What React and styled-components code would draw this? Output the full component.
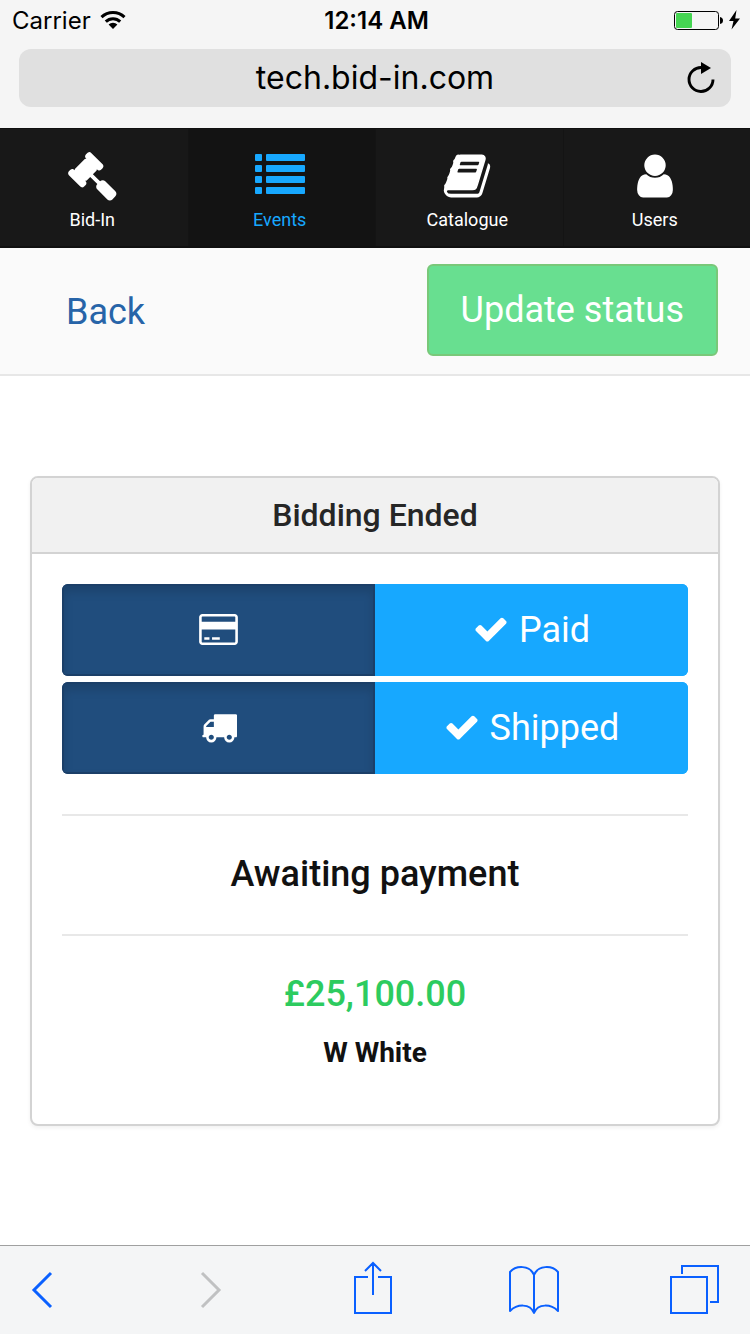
import { useState } from "react";
import styled, { createGlobalStyle } from "styled-components";

const tabs = [
  { id: "bid-in", label: "Bid-In", Icon: GavelIcon },
  { id: "events", label: "Events", Icon: ListIcon },
  { id: "catalogue", label: "Catalogue", Icon: BookIcon },
  { id: "users", label: "Users", Icon: UserIcon },
];

export default function App() {
  const [activeTab, setActiveTab] = useState("events");
  const [paid, setPaid] = useState(false);
  const [shipped, setShipped] = useState(false);

  return (
    <>
      <GlobalStyle />
      <Page>
        <BrowserTop>
          <StatusBar>
            <Carrier>
              <span>Carrier</span>
              <WifiIcon />
            </Carrier>
            <Time>12:14 AM</Time>
            <Battery>
              <BatteryIcon />
            </Battery>
          </StatusBar>
          <AddressBar>
            <Address>tech.bid-in.com</Address>
            <PlainButton aria-label="Reload">
              <ReloadIcon />
            </PlainButton>
          </AddressBar>
        </BrowserTop>

        <Nav>
          {tabs.map(({ id, label, Icon }) => (
            <NavButton
              key={id}
              $active={activeTab === id}
              onClick={() => setActiveTab(id)}
            >
              <Icon />
              <span>{label}</span>
            </NavButton>
          ))}
        </Nav>

        <ActionBar>
          <BackLink href="#back">Back</BackLink>
          <UpdateButton>Update status</UpdateButton>
        </ActionBar>

        <Main>
          <Panel>
            <PanelTitle>Bidding Ended</PanelTitle>
            <PanelBody>
              <ToggleList>
                <ToggleRow>
                  <ToggleButton
                    $pressed={!paid}
                    aria-label="Not paid"
                    onClick={() => setPaid(false)}
                  >
                    <CardIcon />
                  </ToggleButton>
                  <ToggleButton $pressed={paid} onClick={() => setPaid(true)}>
                    <CheckIcon />
                    <span>Paid</span>
                  </ToggleButton>
                </ToggleRow>
                <ToggleRow>
                  <ToggleButton
                    $pressed={!shipped}
                    aria-label="Not shipped"
                    onClick={() => setShipped(false)}
                  >
                    <TruckIcon />
                  </ToggleButton>
                  <ToggleButton
                    $pressed={shipped}
                    onClick={() => setShipped(true)}
                  >
                    <CheckIcon />
                    <span>Shipped</span>
                  </ToggleButton>
                </ToggleRow>
              </ToggleList>
              <State>Awaiting payment</State>
              <Price>£25,100.00</Price>
              <Buyer>W White</Buyer>
            </PanelBody>
          </Panel>
        </Main>

        <BrowserBottom>
          <PlainButton aria-label="Previous page">
            <ChevronLeftIcon />
          </PlainButton>
          <PlainButton aria-label="Next page" disabled>
            <ChevronRightIcon />
          </PlainButton>
          <PlainButton aria-label="Share">
            <ShareIcon />
          </PlainButton>
          <PlainButton aria-label="Bookmarks">
            <BookmarksIcon />
          </PlainButton>
          <PlainButton aria-label="Tabs">
            <TabsIcon />
          </PlainButton>
        </BrowserBottom>
      </Page>
    </>
  );
}

// --------------------------icons

function WifiIcon() {
  return (
    <svg width="26" height="20" viewBox="0 0 26 20">
      <g fill="none" stroke="#000" strokeWidth="3">
        <path d="M1.5 7.2a16.5 16.5 0 0 1 23 0" />
        <path d="M5.8 11.6a10.3 10.3 0 0 1 14.4 0" />
      </g>
      <path d="M8.6 14.6a6.3 6.3 0 0 1 8.8 0L13 19z" />
    </svg>
  );
}

function BatteryIcon() {
  return (
    <svg width="67" height="20" viewBox="0 0 67 20">
      <rect x=".5" y="1.5" width="44" height="18" rx="3" fill="none" stroke="#000" />
      <rect x="2" y="3" width="16" height="15" rx="1" fill="#45d552" />
      <path d="M46 7q3 .5 3 3.5t-3 3.5z" />
      <path d="M62.500 0 55 11h4.500L57.500 19.500 66 8.500h-4.800z" />
    </svg>
  );
}

function ReloadIcon() {
  return (
    <svg width="28" height="32" viewBox="0 0 28 32">
      <path
        d="M14.500 5.500A12 12 0 1 0 26 17.500"
        fill="none"
        stroke="#000"
        strokeWidth="2.900"
      />
      <path d="M14 0v12L24 6z" />
    </svg>
  );
}

function GavelIcon() {
  return (
    <svg width="50" height="50" viewBox="0 0 1792 1792" fill="currentColor">
      <path d="M1771 1536q0 53-37 90l-107 108q-39 37-91 37-53 0-90-37l-363-364q-38-36-38-90 0-53 43-96l-256-256-126 126q-14 14-34 14t-34-14q2 2 12.500 12t12.500 13 10 11.500 10 13.500 6 13.500 5.500 16.500 1.500 18q0 38-28 68-3 3-16.500 18t-19 20.500-18.500 16.500-22 15.500-22 9-26 4.500q-40 0-68-28l-408-408q-28-28-28-68 0-13 4.500-26t9-22 15.500-22 16.500-18.500 20.500-19 18-16.500q30-28 68-28 10 0 18 1.500t16.500 5.500 13.500 6 13.500 10 11.500 10 13 12.500 12 12.500q-14-14-14-34t14-34l348-348q14-14 34-14t34 14q-2-2-12.500-12t-12.500-13-10-11.500-10-13.500-6-13.500-5.500-16.500-1.500-18q0-38 28-68 3-3 16.500-18t19-20.500 18.500-16.500 22-15.500 22-9 26-4.500q40 0 68 28l408 408q28 28 28 68 0 13-4.500 26t-9 22-15.500 22-16.500 18.500-20.500 19-18 16.500q-30 28-68 28-10 0-18-1.500t-16.500-5.500-13.500-6-13.500-10-11.500-10-13-12.500-12-12.500q14 14 14 34t-14 34l-126 126 256 256q43-43 96-43 52 0 91 37l363 363q37 39 37 91z" />
    </svg>
  );
}

function ListIcon() {
  return (
    <svg width="50" height="50" viewBox="0 0 50 50" fill="currentColor">
      {[3, 14, 25, 36].map((y) => (
        <g key={y}>
          <rect x="0" y={y} width="7" height="7" rx="1" />
          <rect x="11" y={y} width="39" height="7" rx="1" />
        </g>
      ))}
    </svg>
  );
}

function BookIcon() {
  return (
    <svg width="50" height="50" viewBox="0 0 1792 1792" fill="currentColor">
      <path d="M1703 478q40 57 18 129l-275 906q-19 64-76.500 107.500t-122.500 43.500h-923q-77 0-148.500-53.500t-99.500-131.500q-24-67-2-127 0-4 3-27t4-37q1-8-3-21.500t-3-19.500q2-11 8-21t16.500-23.500 16.500-23.500q23-38 45-91.500t30-91.500q3-10 .5-30t-.5-28q3-11 17-28t17-23q21-36 42-92t25-90q1-9-2.500-32t.5-28q4-13 22-30.500t22-22.500q19-26 42.500-84.500t27.500-96.500q1-8-3-25.500t-2-26.500q2-8 9-18t18-23 17-21q8-12 16.500-30.500t15-35 16-36 19.500-32 26.500-23.500 36-11.500 47.500 5.500l-1 3q38-9 51-9h761q74 0 114 56t18 130l-274 906q-36 119-71.500 153.500t-128.500 34.500h-869q-27 0-38 15-11 16-1 43 24 70 144 70h923q29 0 56-15.500t35-41.500l300-987q7-22 5-57 38 15 59 43zm-1064 2q-4 13 2 22.500t20 9.500h608q13 0 25.500-9.500t16.500-22.500l21-64q4-13-2-22.500t-20-9.500h-608q-13 0-25.500 9.500t-16.500 22.500zm-83 256q-4 13 2 22.500t20 9.500h608q13 0 25.500-9.500t16.500-22.500l21-64q4-13-2-22.500t-20-9.500h-608q-13 0-25.500 9.500t-16.500 22.500z" />
    </svg>
  );
}

function UserIcon() {
  return (
    <svg width="50" height="50" viewBox="0 0 1792 1792" fill="currentColor">
      <path d="M1536 1399q0 109-62.500 187t-150.500 78h-854q-88 0-150.500-78t-62.500-187q0-85 8.500-160.500t31.500-152 58.500-131 94-89 134.500-34.500q131 128 313 128t313-128q76 0 134.500 34.500t94 89 58.500 131 31.500 152 8.500 160.500zm-256-887q0 159-112.500 271.500t-271.500 112.500-271.500-112.500-112.500-271.500 112.500-271.500 271.500-112.500 271.500 112.500 112.500 271.500z" />
    </svg>
  );
}

function CardIcon() {
  return (
    <svg width="39" height="31" viewBox="0 0 1920 1536" fill="currentColor">
      <path d="M1760 0q66 0 113 47t47 113v1216q0 66-47 113t-113 47h-1600q-66 0-113-47t-47-113v-1216q0-66 47-113t113-47h1600zm-1600 128q-13 0-22.500 9.500t-9.500 22.500v224h1664v-224q0-13-9.500-22.500t-22.500-9.500h-1600zm1600 1280q13 0 22.500-9.500t9.500-22.500v-608h-1664v608q0 13 9.500 22.500t22.500 9.500h1600zm-1504-128v-128h256v128h-256zm384 0v-128h384v128h-384z" />
    </svg>
  );
}

function TruckIcon() {
  return (
    <svg width="36" height="36" viewBox="0 0 1792 1792" fill="currentColor">
      <path d="M640 1408q0-52-38-90t-90-38-90 38-38 90 38 90 90 38 90-38 38-90zm-384-512h384v-256h-158q-13 0-22 9l-195 195q-9 9-9 22v30zm1280 512q0-52-38-90t-90-38-90 38-38 90 38 90 90 38 90-38 38-90zm256-1088v1024q0 15-4 26.500t-13.500 18.500-16.500 11.500-23.500 6-22.500 2-25.500 0-22.500-.5q0 106-75 181t-181 75-181-75-75-181h-384q0 106-75 181t-181 75-181-75-75-181h-64q-3 0-22.500.5t-25.500 0-22.500-2-23.500-6-16.500-11.500-13.500-18.500-4-26.500q0-26 19-45t45-19v-320q0-8-.5-35t0-38 2.500-34.500 6.500-37 14-30.500 22.500-30l198-198q19-19 50.500-32t58.500-13h160v-192q0-26 19-45t45-19h1024q26 0 45 19t19 45z" />
    </svg>
  );
}

function CheckIcon() {
  return (
    <svg width="36" height="36" viewBox="0 0 1792 1792" fill="currentColor">
      <path d="M1671 566q0 40-28 68l-724 724-136 136q-28 28-68 28t-68-28l-136-136-362-362q-28-28-28-68t28-68l136-136q28-28 68-28t68 28l294 295 656-657q28-28 68-28t68 28l136 136q28 28 28 68z" />
    </svg>
  );
}

function ChevronLeftIcon() {
  return (
    <svg width="24" height="56" viewBox="0 0 24 56" fill="none" stroke="currentColor">
      <path d="M21 12 4 29l17 17" strokeWidth="3" />
    </svg>
  );
}

function ChevronRightIcon() {
  return (
    <svg width="24" height="56" viewBox="0 0 24 56" fill="none" stroke="currentColor">
      <path d="M3 12l17 17L3 46" strokeWidth="3" />
    </svg>
  );
}

function ShareIcon() {
  return (
    <svg width="40" height="56" viewBox="0 0 40 56" fill="none" stroke="currentColor">
      <path d="M15 16H2v36h36V16H25M20 34V2M12 10l8-8 8 8" strokeWidth="2" />
    </svg>
  );
}

function BookmarksIcon() {
  return (
    <svg width="52" height="56" viewBox="0 0 52 56" fill="none" stroke="currentColor">
      <path
        d="M27 14C23 4 9 4 3 11v39c7-7 20-8 24 2C31 42 44 43 51 50V11C45 4 31 4 27 14zv38"
        strokeWidth="2"
        strokeLinejoin="round"
      />
    </svg>
  );
}

function TabsIcon() {
  return (
    <svg width="50" height="56" viewBox="0 0 50 56" fill="none" stroke="currentColor">
      <path d="M2 16h36v36H2zM13 13V5h36v36h-8" strokeWidth="2" />
    </svg>
  );
}

// --------------------------css

const GlobalStyle = createGlobalStyle`
  * {
    box-sizing: border-box;
  }
  body {
    margin: 0;
    background-color: #ffffff;
    font-family: Roboto, "Liberation Sans", sans-serif;
  }
  button {
    font-family: inherit;
    cursor: pointer;
  }
  svg {
    display: block;
    flex-shrink: 0;
  }
`;

const Page = styled.div`
  min-height: 100vh;
  display: flex;
  flex-direction: column;
`;

const BrowserTop = styled.header`
  padding-bottom: 21px;
  display: flex;
  flex-direction: column;
  gap: 7px;
  background-color: #f5f5f5;
  color: #000000;
  font-family: Inter, "Liberation Sans", sans-serif;
`;

const StatusBar = styled.div`
  padding: 0 9px 0 12px;
  display: grid;
  grid-template-columns: 1fr auto 1fr;
  align-items: center;
  font-size: 24px;
  line-height: 42px;
`;

const Carrier = styled.div`
  display: flex;
  align-items: center;
  gap: 9px;

  svg {
    margin-bottom: 2px;
  }
`;

const Time = styled.div`
  font-weight: 600;
`;

const Battery = styled.div`
  padding-bottom: 2px;
  display: flex;
  justify-content: flex-end;
`;

const AddressBar = styled.div`
  margin: 0 19px;
  padding: 0 16px 0 44px;
  display: flex;
  align-items: center;
  border-radius: 12px;
  background-color: #e0e0e0;
`;

const Address = styled.div`
  flex: 1;
  text-align: center;
  font-size: 32px;
  line-height: 58px;
`;

const PlainButton = styled.button`
  padding: 0;
  border: none;
  background: none;
  color: inherit;
  &:disabled {
    color: #c0c1c2;
    cursor: default;
  }
`;

const Nav = styled.nav`
  height: 120px;
  display: grid;
  grid-template-columns: repeat(4, 1fr);
  border-top: 1px solid #101010;
  border-bottom: 2px solid #101010;
  background-color: #181818;
`;

const NavButton = styled.button`
  padding: 22px 4px 0 0;
  display: flex;
  flex-direction: column;
  align-items: center;
  gap: 8px;
  border: none;
  border-left: 1px solid #141414;
  background-color: ${(props) => (props.$active ? "#131313" : "#181818")};
  color: ${(props) => (props.$active ? "#17a8ff" : "#ffffff")};
  font-size: 18px;
  line-height: 22px;

  &:first-child {
    border-left-color: transparent;
  }
`;

const ActionBar = styled.div`
  padding: 16px 32px 18px;
  display: flex;
  align-items: center;
  justify-content: space-between;
  border-bottom: 2px solid #e7e7e7;
  background-color: #fafafa;
`;

const BackLink = styled.a`
  padding: 4px 34px 0;
  color: #2764a8;
  font-size: 36px;
  line-height: 50px;
  text-decoration: none;
`;

const UpdateButton = styled.button`
  height: 92px;
  padding: 0 32px;
  border: 2px solid #79c879;
  border-radius: 6px;
  background-color: #68df90;
  color: #ffffff;
  font-size: 36px;
`;

const Main = styled.main`
  flex: 1;
  padding: 100px 30px;
`;

const Panel = styled.section`
  border: 2px solid #d3d3d3;
  border-radius: 8px;
  overflow: hidden;
  background-color: #ffffff;
  box-shadow: 0 2px 4px rgba(0, 0, 0, 0.06);
  text-align: center;
`;

const PanelTitle = styled.h1`
  margin: 0;
  padding: 17px 30px;
  border-bottom: 2px solid #d3d3d3;
  background-color: #f1f1f1;
  color: #262626;
  font-size: 32px;
  font-weight: 500;
  line-height: 40px;
`;

const PanelBody = styled.div`
  padding: 30px 30px 50px;
`;

const ToggleList = styled.div`
  display: grid;
  gap: 6px;
`;

const ToggleRow = styled.div`
  display: grid;
  grid-template-columns: 1fr 1fr;
  border-radius: 6px;
  overflow: hidden;
`;

const ToggleButton = styled.button`
  height: 92px;
  padding: 0;
  display: flex;
  align-items: center;
  justify-content: center;
  gap: 10px;
  border: 2px solid ${(props) => (props.$pressed ? "#1b3f68" : "#17a8ff")};
  background-color: ${(props) => (props.$pressed ? "#204d7d" : "#17a8ff")};
  box-shadow: ${(props) =>
    props.$pressed ? "inset 0 6px 10px rgba(0, 0, 0, 0.13)" : "none"};
  color: #ffffff;
  font-size: 36px;

  svg {
    margin-bottom: 2px;
  }
`;

const State = styled.h2`
  margin: 40px 0 33px;
  padding: 33px 0 35px;
  border-top: 2px solid #e8e8e8;
  border-bottom: 2px solid #e8e8e8;
  color: #111111;
  font-size: 36px;
  font-weight: 500;
  line-height: 50px;
`;

const Price = styled.p`
  margin: 0;
  color: #2dcb5f;
  font-size: 36px;
  font-weight: 500;
  line-height: 50px;
`;

const Buyer = styled.p`
  margin: 13px 0 0;
  color: #111111;
  font-size: 28px;
  font-weight: 700;
  line-height: 42px;
`;

const BrowserBottom = styled.footer`
  padding: 15px 31px 17px 30px;
  display: grid;
  grid-template-columns: 22fr 20fr 20fr 21fr auto;
  justify-items: start;
  border-top: 1px solid #a0a0a0;
  background-color: #f4f5f6;
  color: #0a60ff;
`;
